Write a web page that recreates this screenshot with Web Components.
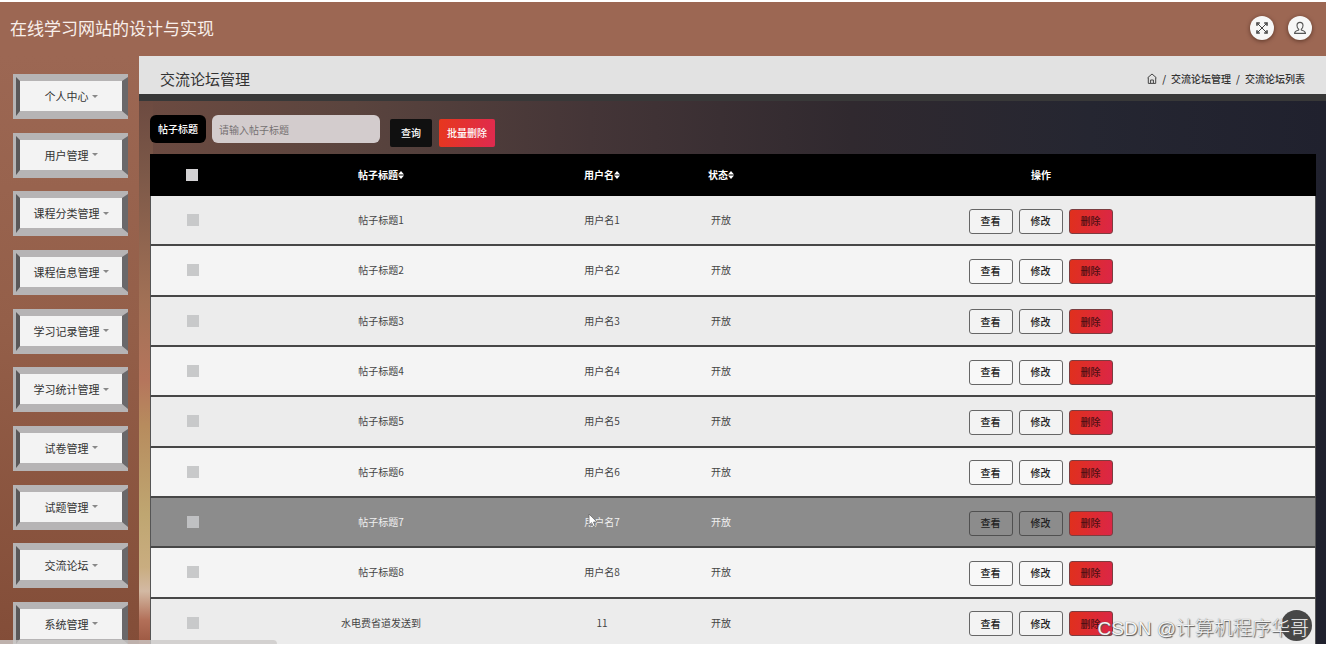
<!DOCTYPE html>
<html lang="zh-CN">
<head>
<meta charset="utf-8">
<meta name="viewport" content="width=device-width, initial-scale=1">
<title>在线学习网站的设计与实现</title>
<style>
html, body { height: 100%; }
body { margin: 0; background: #fff; font: 10px/16px "Noto Sans CJK SC", sans-serif; color: #333; overflow: hidden; }
</style>
</head>
<body>
<forum-app></forum-app>
<script>
function define(name, html, setup) {
  const template = document.createElement('template');
  template.innerHTML = html;
  customElements.define(name, class extends HTMLElement {
    constructor() {
      super();
      this.attachShadow({ mode: 'open' }).append(template.content.cloneNode(true));
    }
    connectedCallback() { if (setup) setup(this, this.shadowRoot); }
  });
}

define('round-button', `
<style>
  :host { display: block; }
  button { display: grid; place-items: center; width: 24px; height: 24px; padding: 0; border: 0; border-radius: 50%; background: #f7f7f7; color: #444; box-shadow: 0 1px 4px rgba(40,15,5,.55); }
</style>
<button type="button"><slot></slot></button>`,
(el, root) => root.querySelector('button').setAttribute('aria-label', el.getAttribute('label')));

define('app-header', `
<style>
  :host { display: flex; align-items: center; justify-content: space-between; height: 54px; padding: 0 14px 2px 10px; box-sizing: border-box; background: #9c6753; }
  h1 { margin: 0; font-size: 17px; line-height: 26px; font-weight: 400; color: #f8efeb; }
  div { display: flex; gap: 14px; }
  svg { display: block; }
</style>
<h1>在线学习网站的设计与实现</h1>
<div>
  <round-button label="全屏">
    <svg width="14" height="14" viewBox="0 0 14 14" fill="none" stroke="#444"><path d="M2.500 2.500l9 9M11.500 2.500l-9 9"/><path d="M2 4.800V2h2.800M9.200 2H12v2.800M12 9.200V12H9.200M4.800 12H2V9.200" stroke-width="1.600"/></svg>
  </round-button>
  <round-button label="用户">
    <svg width="14" height="14" viewBox="0 0 14 14" fill="none" stroke="#555" stroke-width="1.1" stroke-linejoin="round"><path d="M7 1.400c-1.900 0-3 1.300-3 3.100 0 1.500.6 2.900 1.700 3.600v.9c-.8.500-3.900.700-4.200 3.400h11c-.3-2.700-3.400-2.900-4.200-3.400v-.9c1.100-.7 1.700-2.100 1.700-3.600 0-1.800-1.100-3.100-3-3.100z"/></svg>
  </round-button>
</div>`);

define('nav-item', `
<style>
  :host { display: block; }
  button { display: flex; align-items: center; width: 100%; height: 45px; padding: 0; border: 0; background: #b6b4b5; font: inherit; font-size: 11px; color: #333; }
  .face { box-sizing: border-box; display: flex; align-items: center; justify-content: center; gap: 3px; flex: 1; height: 39px; margin: 0 0 0 3px; border: 4px solid; border-width: 4px 6px 5px 4px; border-color: #b6b4b5 #6a686a #b6b4b5 #5a5859; background: linear-gradient(#f3f3f3, #f3f3f3) padding-box; }
  i { width: 0; height: 0; border: 3px solid transparent; border-top-color: #888; border-bottom: 0; }
</style>
<button type="button"><span class="face"><slot></slot><i></i></span></button>`);

define('side-nav', `
<style>
  :host { display: block; width: 139px; flex: none; overflow: hidden; background: linear-gradient(#9c6753, #945f49 45%, #834d38); }
  nav { box-sizing: border-box; height: calc(100vh - 57px); padding: 18px 11px 0 13px; display: flex; flex-direction: column; justify-content: space-between; }
</style>
<nav>
  <nav-item>个人中心</nav-item><nav-item>用户管理</nav-item><nav-item>课程分类管理</nav-item>
  <nav-item>课程信息管理</nav-item><nav-item>学习记录管理</nav-item><nav-item>学习统计管理</nav-item>
  <nav-item>试卷管理</nav-item><nav-item>试题管理</nav-item><nav-item>交流论坛</nav-item><nav-item>系统管理</nav-item>
</nav>`);

define('page-head', `
<style>
  :host { display: flex; align-items: center; justify-content: space-between; height: 45px; padding: 7px 21px 0; box-sizing: border-box; border-bottom: 7px solid #383838; background: #e2e2e2; }
  h2 { margin: 0; font-size: 15px; line-height: 22px; font-weight: 400; color: #333; }
  nav { display: flex; align-items: center; gap: 5px; font-size: 10px; font-weight: 500; }
  a { color: #333; text-decoration: none; }
  svg { display: block; }
</style>
<h2>交流论坛管理</h2>
<nav aria-label="当前位置">
  <a href="#home" aria-label="首页"><svg width="10" height="11" viewBox="0 0 10 11" fill="none" stroke="#444"><path d="M.6 4.800L5 1l4.400 3.800M1.300 4.500v5.900h7.400V4.500M3.600 10V7h2.800v3"/></svg></a>
  <span>/</span><a href="#forum">交流论坛管理</a><span>/</span><a href="#list">交流论坛列表</a>
</nav>`);

define('search-bar', `
<style>
  :host { display: block; }
  form { display: flex; align-items: flex-start; margin: 0; height: 39px; }
  label, button { color: #fff; font: inherit; font-weight: 500; font-size: 10px; border: 0; height: 28px; line-height: 28px; }
  label { padding: 0 8px; background: #000; border-radius: 6px; margin-right: 6px; }
  input { box-sizing: border-box; width: 168px; height: 28px; padding: 0 7px; border: 0; border-radius: 6px; background: #d3cccd; font: inherit; margin-right: 10px; }
  input::placeholder { color: #757172; opacity: 1; }
  button { margin: 4px 7px 0 0; padding: 0 11px; border-radius: 2px; background: #101010; }
  .delete { padding: 0 8px; background: linear-gradient(100deg, #e7371d, #df2a50); }
</style>
<form>
  <label for="title">帖子标题</label><input id="title" type="text" placeholder="请输入帖子标题">
  <button type="button">查询</button><button class="delete" type="button">批量删除</button>
</form>`);

define('row-actions', `
<style>
  :host { display: flex; justify-content: center; gap: 6px; padding-top: 2px; }
  button { box-sizing: border-box; width: 44px; height: 25px; padding: 0; border: 1px solid #666; border-radius: 3px; background: rgba(255,255,255,.4); font: inherit; font-weight: 500; font-size: 10px; color: #222; }
  :host([active]) button { background: transparent; border-color: #505050; }
  button.delete, :host([active]) button.delete { background: linear-gradient(100deg, #e0301c, #db2647); border-color: #7c3d40; color: #4a0f12; }
</style>
<button type="button">查看</button><button type="button">修改</button><button class="delete" type="button">删除</button>`);

define('forum-table', `
<style>
  :host { display: block; }
  table { width: 100%; height: calc(100vh - 153px); table-layout: fixed; border-collapse: separate; border-spacing: 0; text-align: center; background: #444; }
  th, td { padding: 0; vertical-align: middle; }
  th { height: 42px; background: #000; color: #fff; font-weight: 700; }
  td { border-bottom: 2px solid #474747; background: #f4f4f4; color: #444; }
  td:first-child { border-left: 1px solid #555; }
  td:last-child { border-right: 1px solid #555; }
  tbody tr:nth-child(odd) td { background: #ececec; }
  tbody tr.active td { background: #8c8c8c; color: #f0f0f0; }
  input { appearance: none; display: block; width: 12px; height: 12px; margin: 0 auto; background: #c8c9ca; }
  th input { background: #d3d2d4; }
  .active input { background: #bfc0c2; }
  th span { display: inline-flex; align-items: center; }
</style>
<table>
  <colgroup><col style="width:84px"><col style="width:294px"><col style="width:148px"><col style="width:90px"><col style="width:550px"></colgroup>
  <thead><tr>
    <th><input type="checkbox" aria-label="全选"></th>
    <th><span>帖子标题<sort-mark></sort-mark></span></th><th><span>用户名<sort-mark></sort-mark></span></th><th><span>状态<sort-mark></sort-mark></span></th><th>操作</th>
  </tr></thead>
  <tbody></tbody>
</table>`,
(el, root) => {
  const posts = [1, 2, 3, 4, 5, 6, 7, 8].map(n => ['帖子标题' + n, '用户名' + n]);
  posts.push(['水电费省道发送到', '11']);
  root.querySelector('tbody').innerHTML = posts.map(([title, user], i) => `
    <tr class="${i === 6 ? 'active' : ''}"><td><input type="checkbox" aria-label="选择${title}"></td>
    <td>${title}</td><td>${user}</td><td>开放</td><td><row-actions${i === 6 ? ' active' : ''}></row-actions></td></tr>`).join('');
});

define('sort-mark', `
<style>:host { display: block; } svg { display: block; }</style>
<svg width="6" height="8" viewBox="0 0 6 8" fill="#fff"><path d="M0 3.400L3 0l3 3.400zM0 4.600L3 8l3-3.400z"/></svg>`);

define('forum-app', `
<style>
  :host { position: relative; display: flex; flex-direction: column; height: 100vh; box-sizing: border-box; padding: 2px 0 4px; overflow: hidden; }
  .body { display: flex; flex: 1; min-height: 0; }
  main { flex: 1; min-width: 0; overflow: hidden; background:
    linear-gradient(#6d4b41 8%, #7c5848 20%, #a27156 42%, #b5755c 55%, #b78c5e 63%, #bfa671 78%, #c9ad80 87%, #d3b9a3 91%, #b26f58 96%, #9b5741) left / 14px 100% no-repeat,
    linear-gradient(90deg, #6d4b41, #5a443e 18%, #443537 38%, #30292f 60%, #252631 80%, #20212e); }
  .content { padding: 14px 10px 0 11px; }
  .status { position: absolute; left: 0; bottom: 4px; width: 277px; height: 4px; border-radius: 0 4px 0 0; background: rgba(205,202,201,.8); }
  .round { position: absolute; right: 14px; bottom: 7px; width: 31px; height: 31px; border-radius: 50%; background: #474747; }
  .mark { position: absolute; right: 17px; bottom: 5px; font: 300 19px/28px "Liberation Sans", "Noto Sans CJK SC", sans-serif; color: #f4f4f4; white-space: nowrap; text-shadow: 1px 1px 1px #555, 0 0 1px #666; }
  .cursor { position: absolute; left: 588px; top: 513px; }
</style>
<app-header></app-header>
<div class="body">
  <side-nav></side-nav>
  <main>
    <page-head></page-head>
    <div class="content"><search-bar></search-bar><forum-table></forum-table></div>
  </main>
</div>
<div class="status"></div>
<div class="round"></div>
<div class="mark">CSDN @计算机程序华哥</div>
<svg class="cursor" width="10" height="15" viewBox="0 0 10 15"><path d="M1 1v11l2.600-2.300 1.800 4 1.800-.8-1.700-3.800H9z" fill="#fff" stroke="#666" stroke-width=".8"/></svg>`);
</script>
</body>
</html>
